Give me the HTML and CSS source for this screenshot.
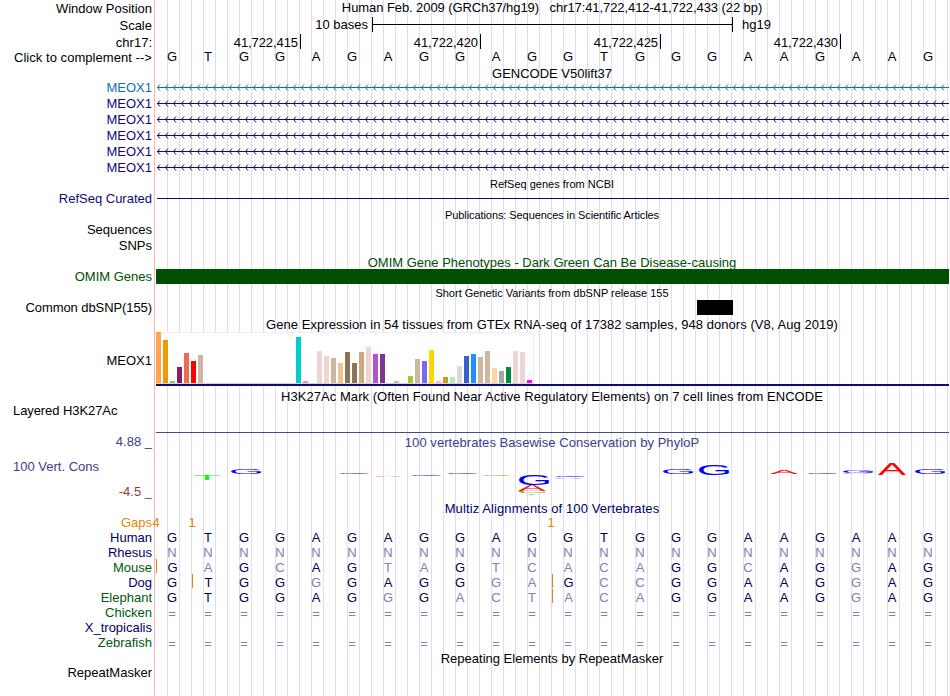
FILE: index.html
```html
<!DOCTYPE html>
<html lang="en">
<head>
  <meta charset="UTF-8">
  <title>Human chr17:41,722,412-41,722,433</title>
  <link rel="stylesheet" href="styles.css">
</head>
<body>
<div class="browser">

  <!-- Position and ruler -->
  <div class="row h17">
    <div class="label low">Window Position</div>
    <div class="title tight">Human Feb. 2009 (GRCh37/hg19) &nbsp; chr17:41,722,412-41,722,433 (22 bp)</div>
  </div>
  <div class="row h18">
    <div class="label low">Scale</div>
    <div class="scale"><span class="scale-size">10 bases</span><span class="scale-bar"></span><span>hg19</span></div>
  </div>
  <div class="row h14">
    <div class="label">chr17:</div>
    <div class="ruler"><span>41,722,415</span><span>41,722,420</span><span>41,722,425</span><span>41,722,430</span></div>
  </div>
  <div class="row h17">
    <div class="label low loose">Click to complement --&gt;</div>
    <div class="bases plain" data-seq="GTGGAGAGGAGGTGGGAAGAAG"></div>
  </div>

  <!-- GENCODE -->
  <div class="row h14"><div class="title">GENCODE V50lift37</div></div>
  <div class="row h16 gene light"><div class="label">MEOX1</div><svg class="intron"></svg></div>
  <div class="row h16 gene"><div class="label">MEOX1</div><svg class="intron"></svg></div>
  <div class="row h16 gene"><div class="label">MEOX1</div><svg class="intron"></svg></div>
  <div class="row h16 gene"><div class="label">MEOX1</div><svg class="intron"></svg></div>
  <div class="row h16 gene"><div class="label">MEOX1</div><svg class="intron"></svg></div>
  <div class="row h16 gene"><div class="label">MEOX1</div><svg class="intron"></svg></div>

  <!-- RefSeq, publications, OMIM, SNPs -->
  <div class="row h15"><div class="title small low">RefSeq genes from NCBI</div></div>
  <div class="row h16 gene"><div class="label">RefSeq Curated</div><div class="refseq"></div></div>
  <div class="row h15"><div class="title small low tight">Publications: Sequences in Scientific Articles</div></div>
  <div class="row h16"><div class="label">Sequences</div></div>
  <div class="row h17"><div class="label">SNPs</div></div>
  <div class="row h14 omim"><div class="title">OMIM Gene Phenotypes - Dark Green Can Be Disease-causing</div></div>
  <div class="row h15 omim"><div class="label">OMIM Genes</div><div class="omim-bar"></div></div>
  <div class="row h16"><div class="title small lower">Short Genetic Variants from dbSNP release 155</div></div>
  <div class="row h17"><div class="label tight">Common dbSNP(155)</div><div class="snp"></div></div>

  <!-- GTEx -->
  <div class="row h15"><div class="title loose">Gene Expression in 54 tissues from GTEx RNA-seq of 17382 samples, 948 donors (V8, Aug 2019)</div></div>
  <div class="row gtex">
    <div class="label">MEOX1</div>
    <div class="gtex-track"><div class="gtex-bars" id="gtex"></div></div>
  </div>

  <!-- H3K27Ac -->
  <div class="row h14"><div class="title loose">H3K27Ac Mark (Often Found Near Active Regulatory Elements) on 7 cell lines from ENCODE</div></div>
  <div class="row h31"><div class="label left tight">Layered H3K27Ac</div><div class="h3k"></div></div>

  <!-- Conservation -->
  <div class="row cons">
    <div class="cons-labels">
      <div class="label">4.88 _</div>
      <div class="label left">100 Vert. Cons</div>
      <div class="label min">-4.5 _</div>
    </div>
    <div>
      <div class="title low loose">100 vertebrates Basewise Conservation by PhyloP</div>
      <svg class="logo" id="logo" width="795" height="51" viewBox="154 450 795 51"></svg>
    </div>
  </div>

  <!-- Multiz -->
  <div class="row h14 navy"><div class="title looser">Multiz Alignments of 100 Vertebrates</div></div>
  <div class="row h15 gaps">
    <div class="label">Gaps</div>
    <div class="gap-counts"><span>4</span><span>1</span><span class="far">1</span></div>
  </div>
  <div class="row h15 navy"><div class="label">Human</div><div class="bases" data-seq="GTGGAGAGGAGGTGGGAAGAAG"></div></div>
  <div class="row h15 navy"><div class="label">Rhesus</div><div class="bases" data-seq="NNNNNNNNNNNNNNNNNNNNNN"></div></div>
  <div class="row h15 green"><div class="label">Mouse</div><div class="bases" data-seq="GAGCAGTAGTCACAGGCAGGAG" data-gaps="0"></div></div>
  <div class="row h15 navy"><div class="label">Dog</div><div class="bases" data-seq="GTGGGGAGGGAGCCGGAAGGAG" data-gaps="1,11"></div></div>
  <div class="row h15 green"><div class="label">Elephant</div><div class="bases" data-seq="GTGGAGGGACTACAGGAAGGAG" data-gaps="11"></div></div>
  <div class="row h15 green"><div class="label">Chicken</div><div class="bases missing" data-seq="======================"></div></div>
  <div class="row h15 navy"><div class="label">X_tropicalis</div></div>
  <div class="row h16 green"><div class="label">Zebrafish</div><div class="bases missing" data-seq="======================"></div></div>

  <!-- RepeatMasker -->
  <div class="row h14"><div class="title">Repeating Elements by RepeatMasker</div></div>
  <div class="row h16"><div class="label">RepeatMasker</div></div>

</div>
<script src="script.js"></script>
</body>
</html>
```

FILE: styles.css
```css
* {
  box-sizing: border-box;
}
body {
  margin: 0;
  background: #fff;
}
.browser {
  width: 949px;
  height: 696px;
  overflow: hidden;
  font: 13px/15px "Liberation Sans", Arial, sans-serif;
  color: #000;
  white-space: nowrap;
  background:
    linear-gradient(#ffb4b4, #ffb4b4) 154px 0 / 1px 100% no-repeat,
    repeating-linear-gradient(to right, #dcdcff 0 1px, transparent 1px 12px) 167px 0 / 782px 100% no-repeat;
}
.row {
  display: grid;
  grid-template-columns: 154px 795px;
}
.h14 { height: 14px; }
.h15 { height: 15px; }
.h16 { height: 16px; }
.h17 { height: 17px; }
.h18 { height: 18px; }
.h31 { height: 31px; }

.label {
  grid-column: 1;
  padding-right: 2px;
  text-align: right;
}
.label.left {
  padding-left: 13px;
  text-align: left;
}
.title {
  grid-column: 2;
  text-align: center;
  padding-left: 1px;
}
.low {
  padding-top: 1px;
}
.lower {
  padding-top: 2px;
}
.small {
  font-size: 11px;
}
.tight {
  letter-spacing: -0.08px;
}
.loose {
  letter-spacing: 0.05px;
}
.looser {
  letter-spacing: 0.1px;
}

/* ruler */
.scale {
  display: flex;
}
.scale-size {
  width: 214px;
  text-align: right;
  margin-right: 4px;
}
.scale-bar {
  width: 361px;
  height: 15px;
  margin-right: 9px;
  border: solid #000;
  border-width: 0 1px;
  background: linear-gradient(#000, #000) 0 7px / 100% 1px no-repeat;
}
.ruler {
  display: flex;
  width: 687px;
}
.ruler span {
  width: 180px;
  height: 15px;
  margin-top: -1px;
  padding-top: 1px;
  padding-right: 2px;
  text-align: right;
  letter-spacing: -0.08px;
  border-right: 1px solid #000;
}
.ruler span:first-child {
  width: 147px;
}

/* bases */
.bases {
  display: grid;
  grid-template-columns: repeat(22, 36px);
  text-align: center;
  color: #000050;
}
.plain {
  color: #000;
}
.missing {
  padding-top: 1px;
}
.bases .diff {
  color: #8080b4;
}
.bases span {
  height: 14px;
}
.bases .gap {
  margin: -1px 0 0 2px;
  padding: 1px 2px 0 0;
  border-left: 1px solid #e18700;
}

/* genes */
.gene {
  color: #0c0c78;
}
.light {
  color: #0c72ae;
}
.intron {
  width: 795px;
  height: 16px;
}
.refseq {
  height: 8px;
  margin-left: 3px;
  border-bottom: 1px solid #0c0c78;
}
.omim {
  color: #005000;
}
.omim-bar {
  margin-left: 2px;
  background: #005000;
}
.snp {
  width: 36px;
  height: 15px;
  margin-left: 543px;
  background: #000;
}

/* expression graph */
.gtex {
  height: 57px;
}
.gtex .label {
  padding-top: 21px;
}
.gtex-track {
  height: 54px;
  margin-left: 2px;
  border-bottom: 2px solid #0c0c78;
}
.gtex-bars {
  display: flex;
  align-items: flex-end;
  gap: 2px;
  width: 378px;
  height: 52px;
  background: #fff;
  border: solid #f0f0f0;
  border-width: 1px 1px 0 0;
  border-bottom: 1px solid #d4d4d4;
}
.gtex-bars i {
  flex: none;
  width: 5px;
}

.h3k {
  height: 30px;
  margin-left: 2px;
  border-bottom: 1px solid #3c5082;
}

/* conservation */
.cons {
  height: 67px;
  color: #3c3c8c;
}
.cons-labels {
  display: grid;
  row-gap: 10px;
  align-content: start;
}
.min {
  color: #8c3c3c;
}
.logo {
  display: block;
}

.navy {
  color: #000064;
}
.green {
  color: #005a0a;
}
.gaps {
  color: #e18700;
}
.gap-counts {
  display: flex;
  margin-left: -16px;
}
.gap-counts span {
  width: 36px;
  text-align: center;
}
.gap-counts .far {
  margin-left: 323px;
}
```

FILE: script.js
```js
const SVG = "http://www.w3.org/2000/svg";
const human = "GTGGAGAGGAGGTGGGAAGAAG";

// one cell per base, mismatches to human are dimmed
document.querySelectorAll(".bases").forEach(el => {
  const gaps = (el.dataset.gaps || "").split(",");
  [...el.dataset.seq].forEach((base, i) => {
    const cell = document.createElement("span");
    cell.textContent = base;
    if (base !== human[i]) cell.classList.add("diff");
    if (gaps.includes(String(i))) cell.classList.add("gap");
    el.appendChild(cell);
  });
});

// intron line with strand arrows every 8px
document.querySelectorAll(".intron").forEach(el => {
  let d = "M3 7.5H795";
  for (let x = 3; x < 795; x += 8) {
    d += `M${x + 3} 4.5L${x + 0.5} 7.5L${x + 3} 10.5`;
  }
  const path = document.createElementNS(SVG, "path");
  path.setAttribute("d", d);
  path.setAttribute("fill", "none");
  path.setAttribute("stroke", "currentColor");
  el.appendChild(path);
});

// [tissue index, height, colour]
const tissues = [
  [0, 51, "#ffa54f"], [1, 43, "#ee9a00"], [2, 2, "#8fbc8f"], [3, 16, "#8b1c62"],
  [4, 30, "#ee6a50"], [5, 22, "#ff0000"], [6, 28, "#cdb79e"], [20, 46, "#00cdcd"],
  [21, 2, "#ee82ee"], [23, 32, "#eed5d2"], [24, 27, "#eed5d2"], [25, 25, "#cdb79e"],
  [26, 20, "#eec591"], [27, 31, "#8b7355"], [28, 20, "#8b7355"], [29, 31, "#cdaa7d"],
  [30, 36, "#eed5d2"], [31, 29, "#b452cd"], [32, 29, "#7a378b"], [34, 2, "#cdb79e"],
  [36, 7, "#9acd32"], [37, 24, "#cdb79e"], [38, 22, "#7b68ee"], [39, 33, "#ffd700"],
  [40, 2, "#ffb6c1"], [41, 6, "#cd9b1d"], [42, 6, "#b4eeb4"], [43, 17, "#d9d9d9"],
  [44, 27, "#3a5fcd"], [45, 29, "#1e90ff"], [46, 26, "#cdb79e"], [47, 32, "#cdb79e"],
  [48, 15, "#ffd39b"], [49, 12, "#a6a6a6"], [50, 16, "#008b45"], [51, 32, "#eed5d2"],
  [52, 31, "#eed5d2"], [53, 3, "#ff00ff"]
];
const gtex = document.getElementById("gtex");
for (let i = 0; i < 54; i++) {
  const bar = document.createElement("i");
  const t = tissues.find(t => t[0] === i);
  if (t) {
    bar.style.height = t[1] + "px";
    bar.style.background = t[2];
  }
  gtex.appendChild(bar);
}

// conservation letters: [letter, x, y, width, height, colour]
const letters = [
  ["T", 194, 475, 26, 5, "#00ff00"],
  ["G", 231, 469, 30, 5, "#0000ff"],
  ["G", 339, 473, 30, 1, "#0000ff"],
  ["A", 374, 475.3, 28, 1.4, "#ff0000"],
  ["G", 411, 475, 30, 1, "#0000ff"],
  ["G", 447, 473, 30, 1, "#0000ff"],
  ["C", 483, 475, 28, 1, "#a0a000"],
  ["G", 519, 475, 30, 10, "#0000ff"],
  ["A", 518, 485.3, 28, 5.7, "#ff0000"],
  ["C", 519, 491, 28, 2.5, "#a0a000"],
  ["T", 527, 494, 8, 1, "#00ff00"],
  ["G", 555, 475.3, 30, 1.7, "#0000ff"],
  ["A", 554, 477.5, 28, 1.4, "#ff0000"],
  ["G", 663, 469, 30, 5, "#0000ff"],
  ["G", 699, 464, 30, 11, "#0000ff"],
  ["A", 770, 470.3, 28, 3.5, "#ff0000"],
  ["G", 807, 473, 30, 1, "#0000ff"],
  ["G", 843, 470, 30, 3, "#0000ff"],
  ["A", 842, 473, 28, 1, "#ff0000"],
  ["A", 878, 464, 28, 11, "#ff0000"],
  ["G", 915, 469, 30, 5, "#0000ff"]
];
// ink box of each letter at 100px: left, top above baseline, width, height
const ink = {
  A: [0, 69, 66.5, 69],
  C: [5, 70, 64, 71],
  G: [5, 70, 66, 71],
  T: [2, 69, 57, 69]
};
const logo = document.getElementById("logo");
letters.forEach(([ch, x, y, w, h, color]) => {
  const [left, top, iw, ih] = ink[ch];
  const text = document.createElementNS(SVG, "text");
  text.textContent = ch;
  text.setAttribute("font-size", 100);
  text.setAttribute("fill", color);
  text.setAttribute("transform",
    `translate(${x} ${y}) scale(${w / iw} ${h / ih}) translate(${-left} ${top})`);
  logo.appendChild(text);
});
```
